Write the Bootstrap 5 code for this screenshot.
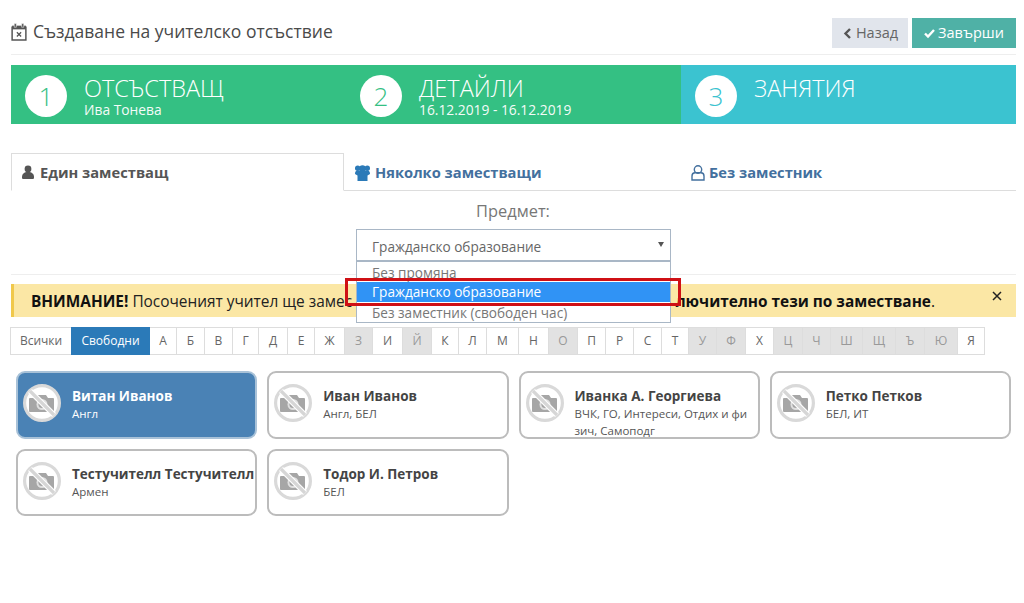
<!doctype html>
<html lang="bg">
<head>
<meta charset="utf-8">
<title>Създаване на учителско отсъствие</title>
<link href="https://cdn.jsdelivr.net/npm/bootstrap@5.3.0/dist/css/bootstrap.min.css" rel="stylesheet">
<style>
body{font-family:"Open Sans","Noto Sans",sans-serif;background:#fff;color:#555;overflow:hidden}
.pg{padding:18px 8px 0 11px;width:1024px;height:603px}
.head{height:37px;border-bottom:1px solid #eee}
.ttl{font-size:17.5px;color:#4a4a4a;line-height:24px;margin:0;font-weight:400;padding-top:1px}
.ttl svg{width:16px;height:18px;margin-right:6px;vertical-align:-3px}
.bt{height:30px;border-radius:0;border:0;font-size:14.5px;padding:0 8px;line-height:30px;white-space:nowrap}
.bt-back{background:#e1e5ec;color:#666;width:76px}
.bt-done{background:#4fb1a6;color:#fff;width:104px}
.bt svg{width:11px;height:11px;vertical-align:-1px;margin-right:3px}
.wiz{margin-top:10px;height:59px;color:#fff}
.stp{width:335px;height:59px;padding:10px 0 0 14px;background:#34c083}
.stp3{flex:1;background:#3bc3d0}
.num{width:42px;height:42px;border-radius:50%;background:#fff;color:#34c083;font-size:26px;font-weight:300;line-height:42px;text-align:center;margin-right:17px}
.stp3 .num{color:#3bc3d0}
.stpt{font-size:23.5px;font-weight:300;line-height:26px;white-space:nowrap}
.stps{font-size:13.8px;font-weight:500;line-height:16px;margin-top:1px;opacity:.95}
.tabs{margin-top:29px;height:38px;border-bottom:1px solid #ddd}
.tabs .nav-link{width:333px;height:38px;border-radius:0;padding:8px 10px;font-size:14.7px;font-weight:700;color:#43709e;margin:0;line-height:21px;border:1px solid transparent}
.tabs .nav-link.active{color:#555;border-color:#ddd #ddd #fff}
.tabs li:nth-child(2) .nav-link{width:336px}
.tabs svg{width:15px;height:16px;margin-right:5px;vertical-align:-3px}
.tabs li:first-child svg{width:12px;height:15px;margin-right:6px;vertical-align:-2px}
.tabs li:last-child svg{margin-right:4px;width:14px;height:16px}
.lbl{font-size:16.4px;text-align:center;color:#777;margin:8px 0 0;line-height:24px;padding-right:1px}
.wrapsel{position:relative;width:315px;margin:6px 0 0 345px}
.sel{height:33px;border:1px solid #a9b7c6;border-bottom-width:2px;font-size:13.6px;line-height:33px;padding-left:15px;color:#666;position:relative;background:#fff}
.sel::after{content:"";position:absolute;right:6px;top:12px;border:3px solid transparent;border-top:5px solid #555;border-bottom:0}
.opts{position:absolute;left:0;right:0;top:33px;border:1px solid #a9b7c6;border-top:0;background:#fff;z-index:3;font-size:13.6px;color:#777}
.opts div{height:20px;line-height:21px;padding-left:15px;white-space:nowrap}
.opts .hl{background:#3093f5;color:#fff;line-height:19px}
.redbox{position:absolute;left:-11px;right:-10px;top:49px;height:28px;border:3px solid #cf1015;z-index:4}
.sep{margin-top:12px;border-top:1px solid #eee;height:0}
.warn{margin:9px 0 0;height:33px;padding:0 81px 0 17px;background:#fbe7a5;border:0;border-left:3px solid #f0c84b;border-radius:0;color:#222;font-size:15.4px;line-height:35px;white-space:nowrap;position:relative;overflow:hidden}
.warn b{color:#111}
.warn .x{position:absolute;right:14px;top:1px;line-height:20px}
.warn .x svg{width:10px;height:10px}
.letters{margin:10px 0 0}
.letters .page-link{border-radius:0!important;font-size:12px;line-height:26px;height:28px;padding:0;text-align:center;color:#666;border-color:#ddd;margin-left:-1px;background:#fff}
.letters .off .page-link{background:#e2e2e2;color:#999}
.letters .active .page-link{background:#2b7ab8;border-color:#2b7ab8;color:#fff}
.ppl{display:grid;grid-template-columns:repeat(4,1fr);gap:10px;margin:16px 0 0 5px;width:995px}
.pcard{height:67.5px;border:2px solid #bcbcbc;border-radius:9px;overflow:hidden;display:flex;background:#fff;padding:11px 0 0 5px}
.pcard.on{background:#4a82b5;border-color:#a9c2d8;color:#fff}
.pcard.on .nm,.pcard.on .sb{color:#fff}
.ava{width:38px;height:38px;flex:none;margin-right:11px}
.nm{font-size:13.5px;font-weight:700;color:#444;line-height:18px;margin-top:3px;white-space:nowrap}
.sb{font-size:11.5px;color:#555;line-height:17px;word-break:break-all;width:176px}
</style>
</head>
<body>
<svg width="0" height="0" class="d-block position-absolute">
<defs>
<symbol id="cam" viewBox="0 0 38 38">
<path d="M7 14h6l2-3h8l2 3h5a1 1 0 0 1 1 1v12a1 1 0 0 1-1 1H7a1 1 0 0 1-1-1V15a1 1 0 0 1 1-1z" fill="#a6a6a6"/>
<circle cx="19" cy="20.500" r="5.500" fill="#e0e0e0"/>
<circle cx="19" cy="20.500" r="3.600" fill="#a6a6a6"/>
<path d="M7 7l24 24" stroke="#fff" stroke-width="5.500"/>
<path d="M7 7l24 24" stroke="#d6d6d6" stroke-width="3.200"/>
</symbol>
<symbol id="noc" viewBox="0 0 38 38">
<circle cx="19" cy="19" r="17.400" fill="#fff" stroke="#d9d9d9" stroke-width="3.200"/>
<use href="#cam"/>
</symbol>
</defs>
</svg>
<div class="pg">
  <div class="head d-flex justify-content-between align-items-start">
    <h1 class="ttl"><svg viewBox="0 0 15 17"><path d="M1 4h13v12H1z" fill="none" stroke="#555" stroke-width="1.400"/><path d="M1 2.500h13V6H1z" fill="#555"/><path d="M3 .5h2v3.500H3zM10 .5h2v3.500h-2z" fill="#555" stroke="#fff" stroke-width=".5"/><path d="M5.500 8.800l4 4m0-4l-4 4" stroke="#555" stroke-width="1.200"/></svg>Създаване на учителско отсъствие</h1>
    <div class="d-flex gap-1">
      <button class="btn bt bt-back"><svg viewBox="0 0 11 11"><path d="M8 1L3.500 5.500 8 10" fill="none" stroke="#555" stroke-width="2.400"/></svg>Назад</button>
      <button class="btn bt bt-done"><svg viewBox="0 0 11 11"><path d="M1 5.500l3 3 6-6.500" fill="none" stroke="#fff" stroke-width="2.400"/></svg>Завърши</button>
    </div>
  </div>

  <div class="wiz d-flex">
    <div class="stp d-flex"><div class="num">1</div><div><div class="stpt">ОТСЪСТВАЩ</div><div class="stps">Ива Тонева</div></div></div>
    <div class="stp d-flex"><div class="num">2</div><div><div class="stpt">ДЕТАЙЛИ</div><div class="stps">16.12.2019 - 16.12.2019</div></div></div>
    <div class="stp stp3 d-flex"><div class="num">3</div><div><div class="stpt">ЗАНЯТИЯ</div></div></div>
  </div>

  <ul class="nav tabs">
    <li class="nav-item"><a class="nav-link active" href="#"><svg viewBox="0 0 12 15"><circle cx="6" cy="4" r="3.400" fill="#555"/><path d="M1 14c-1 0-1-1-1-2 0-3 2-5 6-5s6 2 6 5c0 1 0 2-1 2z" fill="#555"/></svg>Един заместващ</a></li>
    <li class="nav-item"><a class="nav-link" href="#"><svg viewBox="0 0 15 16"><g fill="#2b7ab8"><circle cx="7.500" cy="3.500" r="3.300"/><circle cx="2.700" cy="3.200" r="2.700"/><circle cx="12.300" cy="3.200" r="2.700"/><path d="M0 9c0-2 .7-3.500 2.500-3.500h10C14.300 5.500 15 7 15 9l-2.500 1.500V16h-10v-5.500z"/></g></svg>Няколко заместващи</a></li>
    <li class="nav-item"><a class="nav-link" href="#"><svg viewBox="0 0 14 16"><g fill="none" stroke="#43709e" stroke-width="1.400"><circle cx="7" cy="4.500" r="3.700"/><path d="M1 15v-4c0-2 1.500-3.200 3-3.200h6c1.500 0 3 1.200 3 3.200v4z"/></g></svg>Без заместник</a></li>
  </ul>

  <p class="lbl">Предмет:</p>
  <div class="wrapsel">
    <div class="sel">Гражданско образование</div>
    <div class="opts"><div>Без промяна</div><div class="hl">Гражданско образование</div><div>Без заместник (свободен час)</div></div>
    <div class="redbox"></div>
  </div>
  <div class="sep"></div>

  <div class="alert warn d-flex justify-content-between" role="alert"><span><b>ВНИМАНИЕ!</b> Посоченият учител ще замес</span><b>лючително тези по заместване<span class="fw-normal">.</span></b><span class="x"><svg viewBox="0 0 10 10"><path d="M1 1l8 8m0-8L1 9" stroke="#222" stroke-width="1.500"/></svg></span></div>

  <ul class="pagination letters" id="lt"></ul>

  <div class="ppl">
    <div class="pcard on"><svg class="ava"><use href="#noc"/></svg><div><div class="nm">Витан Иванов</div><div class="sb">Англ</div></div></div>
    <div class="pcard"><svg class="ava"><use href="#noc"/></svg><div><div class="nm">Иван Иванов</div><div class="sb">Англ, БЕЛ</div></div></div>
    <div class="pcard"><svg class="ava"><use href="#noc"/></svg><div><div class="nm">Иванка А. Георгиева</div><div class="sb">ВЧК, ГО, Интереси, Отдих и физич, Самоподг</div></div></div>
    <div class="pcard"><svg class="ava"><use href="#noc"/></svg><div><div class="nm">Петко Петков</div><div class="sb">БЕЛ, ИТ</div></div></div>
    <div class="pcard"><svg class="ava"><use href="#noc"/></svg><div><div class="nm">Тестучителл Тестучителл</div><div class="sb">Армен</div></div></div>
    <div class="pcard"><svg class="ava"><use href="#noc"/></svg><div><div class="nm">Тодор И. Петров</div><div class="sb">БЕЛ</div></div></div>
  </div>
</div>
<script>
var d=[["Всички",61],["Свободни",78,"active"],["А",27],["Б",28],["В",28],["Г",26],["Д",29],["Е",27],["Ж",30],["З",28,"off"],["И",30],["Й",29,"off"],["К",27],["Л",28],["М",32],["Н",30],["О",29,"off"],["П",28],["Р",28],["С",28],["Т",27],["У",28,"off"],["Ф",29,"off"],["Х",28],["Ц",29,"off"],["Ч",28,"off"],["Ш",32,"off"],["Щ",33,"off"],["Ъ",29,"off"],["Ю",33,"off"],["Я",27]];
document.getElementById("lt").innerHTML=d.map(function(x){return '<li class="page-item '+(x[2]||"")+'"><a class="page-link" href="#" style="width:'+(x[1]+1)+'px">'+x[0]+'</a></li>'}).join("");
</script>
</body>
</html>
